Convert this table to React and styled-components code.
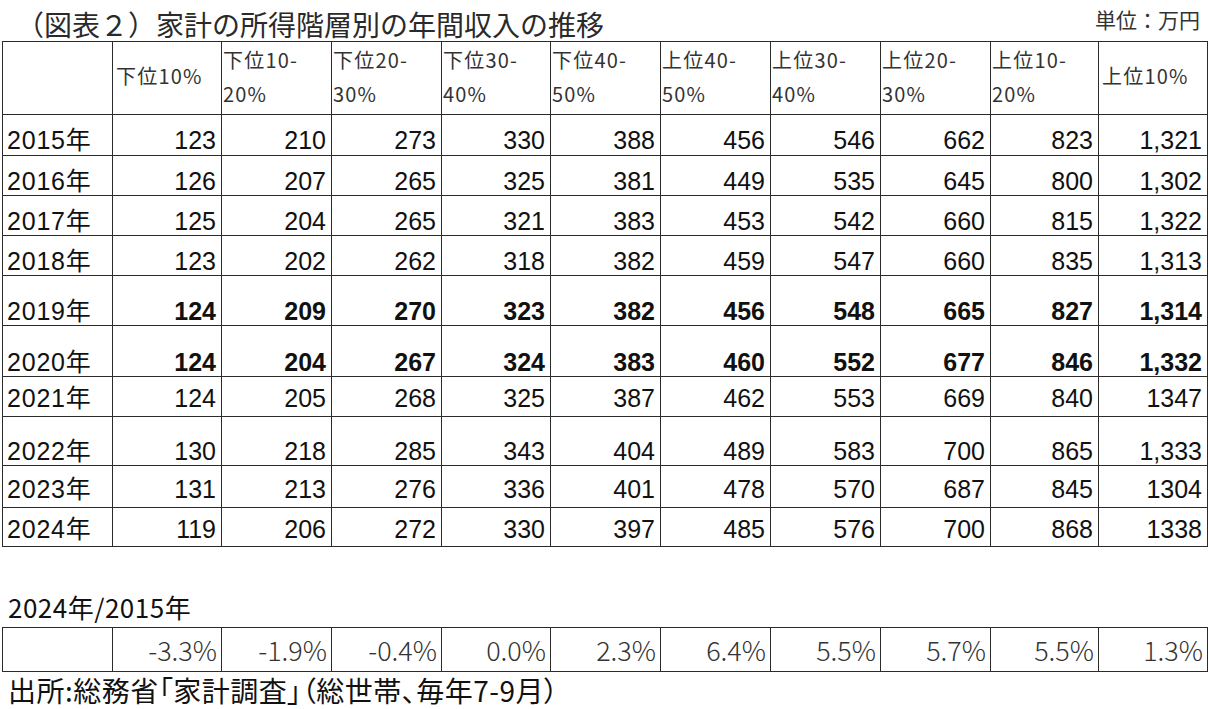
import React from 'react';
import styled, { createGlobalStyle } from 'styled-components';

const GlobalStyle = createGlobalStyle`
  html, body { margin: 0; padding: 0; background: #fff; }
  body { font-family: "Noto Sans CJK JP", sans-serif; color: #111; }
`;

const COLS = [109, 108, 109, 109, 108, 109, 109, 109, 109, 107, 108];
const LINE = '#2b2b2b';

const headers = [
  ['下位10%'],
  ['下位10-', '20%'],
  ['下位20-', '30%'],
  ['下位30-', '40%'],
  ['下位40-', '50%'],
  ['上位40-', '50%'],
  ['上位30-', '40%'],
  ['上位20-', '30%'],
  ['上位10-', '20%'],
  ['上位10%'],
];

const rows = [
  { y: '2015年', h: 40, pb: 2, v: ['123', '210', '273', '330', '388', '456', '546', '662', '823', '1,321'] },
  { y: '2016年', h: 39, pb: 1, v: ['126', '207', '265', '325', '381', '449', '535', '645', '800', '1,302'] },
  { y: '2017年', h: 39, pb: 1, v: ['125', '204', '265', '321', '383', '453', '542', '660', '815', '1,322'] },
  { y: '2018年', h: 39, pb: 1, v: ['123', '202', '262', '318', '382', '459', '547', '660', '835', '1,313'] },
  { y: '2019年', h: 49, pb: 1, bold: true, v: ['124', '209', '270', '323', '382', '456', '548', '665', '827', '1,314'] },
  { y: '2020年', h: 50, pb: 1, bold: true, v: ['124', '204', '267', '324', '383', '460', '552', '677', '846', '1,332'] },
  { y: '2021年', h: 39, pb: 5, v: ['124', '205', '268', '325', '387', '462', '553', '669', '840', '1347'] },
  { y: '2022年', h: 48, pb: 1, v: ['130', '218', '285', '343', '404', '489', '583', '700', '865', '1,333'] },
  { y: '2023年', h: 41, pb: 5, v: ['131', '213', '276', '336', '401', '478', '570', '687', '845', '1304'] },
  { y: '2024年', h: 38, pb: 4, v: ['119', '206', '272', '330', '397', '485', '576', '700', '868', '1338'] },
];

const ratios = ['-3.3%', '-1.9%', '-0.4%', '0.0%', '2.3%', '6.4%', '5.5%', '5.7%', '5.5%', '1.3%'];

const Page = styled.div`
  width: 1208px;
  height: 709px;
  padding-left: 2px;
  box-sizing: border-box;
  overflow: hidden;
`;

const TitleBar = styled.div`
  height: 41px;
  display: flex;
  justify-content: space-between;
  align-items: flex-start;
  padding-right: 8px;
`;

const Title = styled.h1`
  margin: 0;
  padding-left: 14px;
  font-family: "Noto Sans CJK JP", serif;
  font-weight: 400;
  font-size: 28px;
  line-height: 48px;
  letter-spacing: 0;
  color: #2a2a2a;
`;

const Unit = styled.span`
  font-size: 21px;
  line-height: 38px;
  color: #333;
`;

const Grid = styled.div`
  display: grid;
  grid-template-columns: ${COLS.map((c) => `${c}px`).join(' ')};
  grid-template-rows: ${(p) => p.$rows};
  gap: 1px;
  background: ${LINE};
  border: 1px solid ${LINE};
  width: max-content;
`;

const HeadCell = styled.div`
  background: #fff;
  display: flex;
  flex-direction: column;
  justify-content: ${(p) => (p.$single ? 'center' : 'flex-start')};
  padding: ${(p) => (p.$single ? '0 0 4px 3px' : '1px 0 0 1px')};
  font-size: 20px;
  line-height: 34px;
  letter-spacing: 1.2px;
  color: #333;
  white-space: nowrap;
`;

const YearCell = styled.div`
  background: #fff;
  display: flex;
  align-items: flex-end;
  padding: 0 0 ${(p) => p.$pb}px 4px;
  font-family: "Liberation Sans", "Noto Sans CJK JP", sans-serif;
  font-size: 25px;
  line-height: 25px;
  letter-spacing: 0.8px;
  color: #111;
`;

const NumCell = styled.div`
  background: #fff;
  display: flex;
  align-items: flex-end;
  justify-content: flex-end;
  padding: 0 5px ${(p) => p.$pb}px 0;
  font-family: "Liberation Sans", "Noto Sans CJK JP", sans-serif;
  font-size: 25px;
  line-height: 25px;
  font-weight: ${(p) => (p.$bold ? 700 : 400)};
  color: #111;
`;

const SubLabel = styled.div`
  margin-top: 45px;
  height: 30px;
  line-height: 30px;
  font-size: 26px;
  letter-spacing: 0.5px;
  color: #111;
  padding-left: 6px;
  margin-bottom: 5px;
`;

const RatioCell = styled.div`
  background: #fff;
  display: flex;
  align-items: center;
  justify-content: flex-end;
  padding-right: 4px;
  font-family: "Noto Sans CJK JP", sans-serif;
  font-weight: 300;
  font-size: 27px;
  color: #333;
`;

const Source = styled.div`
  margin-top: 4px;
  height: 28px;
  line-height: 28px;
  font-size: 28px;
  letter-spacing: 0.5px;
  font-feature-settings: "palt";
  color: #111;
  padding-left: 6px;
  white-space: nowrap;
`;

export default function App() {
  const rowTemplate = ['72px', ...rows.map((r) => `${r.h}px`)].join(' ');
  return (
    <Page>
      <GlobalStyle />
      <TitleBar>
        <Title>（図表２）家計の所得階層別の年間収入の推移</Title>
        <Unit>単位：万円</Unit>
      </TitleBar>
      <Grid $rows={rowTemplate}>
        <HeadCell />
        {headers.map((h, i) => (
          <HeadCell key={i} $single={h.length === 1}>
            {h.map((line, j) => (
              <span key={j}>{line}</span>
            ))}
          </HeadCell>
        ))}
        {rows.map((r) => (
          <React.Fragment key={r.y}>
            <YearCell $pb={r.pb}>{r.y}</YearCell>
            {r.v.map((val, i) => (
              <NumCell key={i} $pb={r.pb} $bold={r.bold}>
                {val}
              </NumCell>
            ))}
          </React.Fragment>
        ))}
      </Grid>
      <SubLabel>2024年/2015年</SubLabel>
      <Grid $rows="43px">
        <RatioCell />
        {ratios.map((v, i) => (
          <RatioCell key={i}>{v}</RatioCell>
        ))}
      </Grid>
      <Source>出所:総務省「家計調査」（総世帯、毎年7-9月）</Source>
    </Page>
  );
}
